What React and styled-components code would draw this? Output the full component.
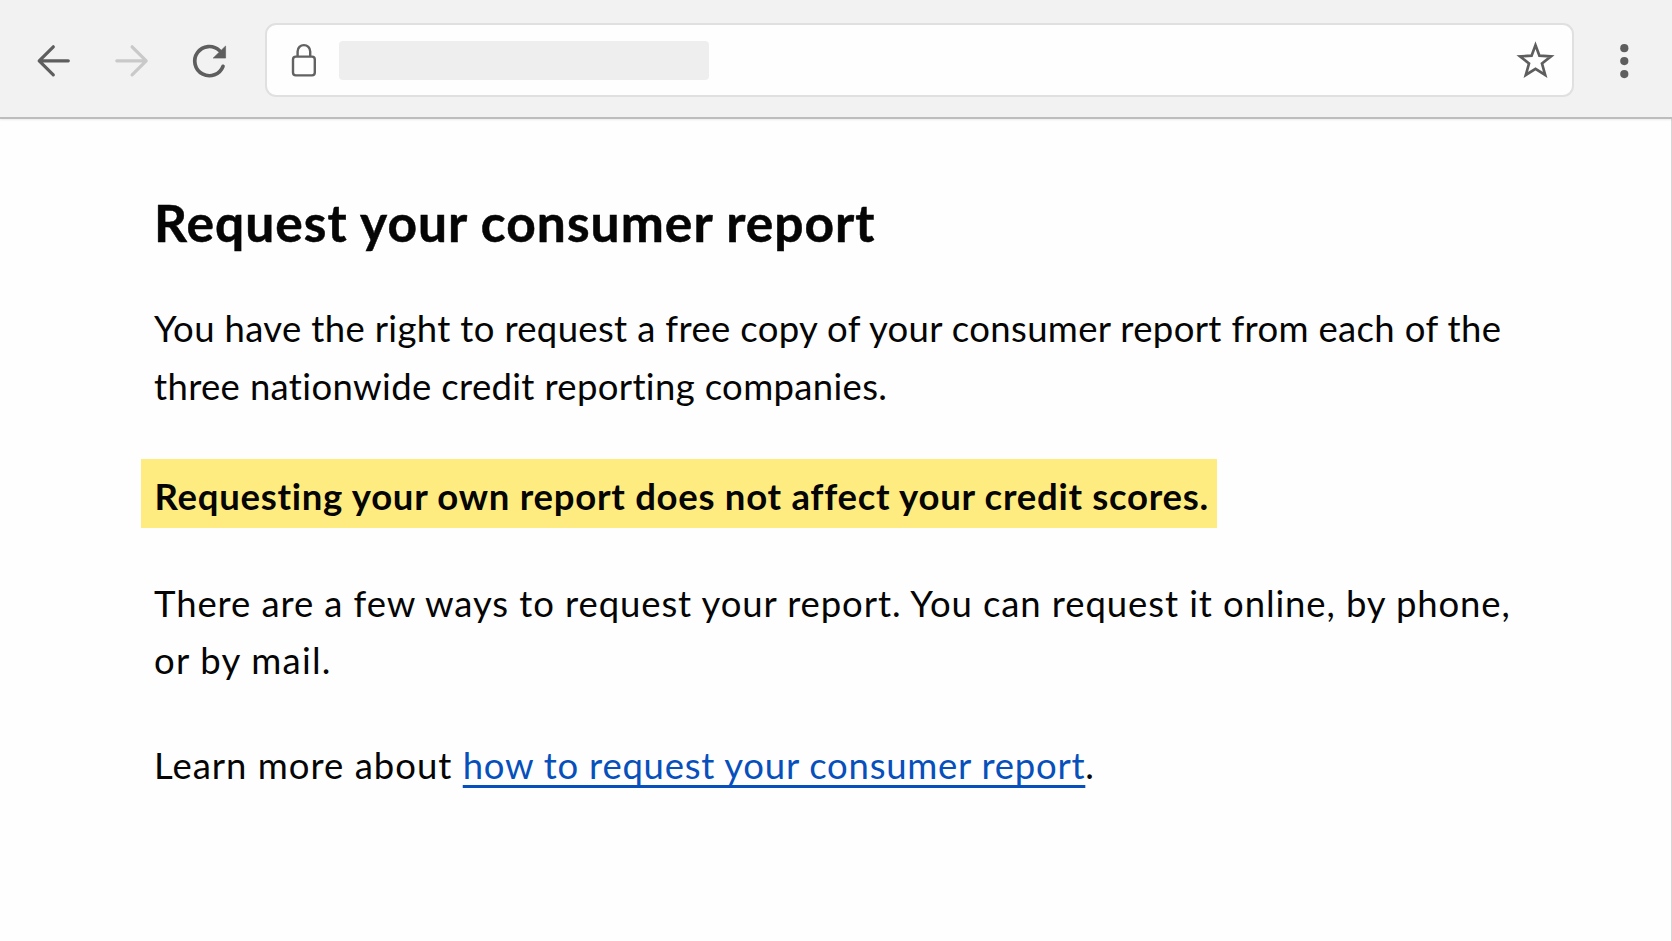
import React from "react";
import styled, { createGlobalStyle } from "styled-components";

const GlobalStyle = createGlobalStyle`
  *, *::before, *::after { box-sizing: border-box; }
  body {
    margin: 0;
    background: #fefefe;
    font-family: Lato, "Open Sans", sans-serif;
    color: #050505;
    overflow: hidden;
  }
`;

const Window = styled.div`
  display: flex;
  flex-direction: column;
  width: 100%;
  height: 941px;
`;

const Toolbar = styled.header`
  flex: none;
  display: flex;
  align-items: center;
  height: 119px;
  padding: 0 32px 0 32px;
  background: #f2f2f2;
  border-bottom: 2px solid #bdbdbd;
  box-shadow: 0 1px 2px rgba(0, 0, 0, 0.08);
  z-index: 1;
`;

const NavButtons = styled.nav`
  display: flex;
  gap: 33.5px;
  margin: 4px 34px 0 0;
`;

const IconButton = styled.button`
  flex: none;
  display: flex;
  width: 44px;
  height: 44px;
  padding: 0;
  border: 0;
  background: none;
  color: ${({ $muted }) => ($muted ? "#c9c9c9" : "#5e5e5e")};

  svg { display: block; width: 44px; height: 44px; overflow: visible; }
`;

const AddressBar = styled.div`
  flex: 1;
  display: flex;
  align-items: center;
  height: 74px;
  margin-top: 2px;
  padding: 0 15px 0 14px;
  border: 2px solid #e0e0e0;
  border-radius: 11px;
  background: #fefefe;
`;

const UrlPlaceholder = styled.div`
  width: 370px;
  height: 39px;
  margin: 1px auto 0 13.5px;
  border-radius: 4px;
  background: #eeeeee;
`;

const MenuSlot = styled.div`
  margin: 4px -6px 0 28px;
`;

const Content = styled.main`
  flex: 1;
  padding: 73px 140px 0 154px;
  border-right: 1px solid #d6d6d6;
`;

const Heading = styled.h1`
  margin: 0 0 47px;
  font-size: 51.5px;
  line-height: 60px;
  font-weight: 700;
  letter-spacing: 1.04px;
  -webkit-text-stroke: 0.5px currentColor;
`;

const Paragraph = styled.p`
  margin: 0 0 ${({ $after }) => $after || 0}px;
  font-size: 36.5px;
  line-height: ${({ $leading }) => $leading || 58}px;
  white-space: nowrap;
`;

const Line = styled.span`
  display: block;
  letter-spacing: ${({ $tracking }) => $tracking}px;
`;

const Highlight = styled.strong`
  display: block;
  width: 1076px;
  height: 69px;
  margin: 0 0 47px -13px;
  padding: 8px 0 3px 13.5px;
  background: #ffec80;
  font-size: 36.5px;
  line-height: 58px;
  font-weight: 700;
  letter-spacing: 0.73px;
  white-space: nowrap;
`;

const Link = styled.a`
  color: #0750bc;
  letter-spacing: 0.75px;
  text-decoration: underline;
  text-decoration-thickness: 2.6px;
  text-underline-offset: 6px;
  text-decoration-skip-ink: none;
`;

const ArrowIcon = ({ forward }) => (
  <svg viewBox="0 0 44 44" fill="none" stroke="currentColor" strokeWidth="3.2" strokeLinecap="round" strokeLinejoin="round">
    {forward ? (
      <path d="M6.8 21.8H36M22.1 7.8L36.2 21.8L22.1 35.8" />
    ) : (
      <path d="M36.3 21.8H7.3M21.3 7.8L7.2 21.8L21.3 35.8" />
    )}
  </svg>
);

const ReloadIcon = () => (
  <svg viewBox="0 0 44 44">
    <path d="M36 27.3A14.6 14.6 0 1 1 32.4 11.5" fill="none" stroke="currentColor" strokeWidth="3.7" strokeLinecap="round" />
    <path d="M38.6 7V19.1H26.2Z" fill="currentColor" stroke="currentColor" strokeWidth="0.6" strokeLinejoin="round" />
  </svg>
);

const LockIcon = styled.svg`
  flex: none;
  width: 46px;
  height: 44px;
  margin: 0 -2px 0 0;
  color: #626262;
`;

export default function App() {
  return (
    <Window>
      <GlobalStyle />
      <Toolbar>
        <NavButtons>
          <IconButton aria-label="Back"><ArrowIcon /></IconButton>
          <IconButton aria-label="Forward" $muted><ArrowIcon forward /></IconButton>
          <IconButton aria-label="Reload"><ReloadIcon /></IconButton>
        </NavButtons>
        <AddressBar>
          <LockIcon viewBox="0 0 46 44" fill="none" stroke="currentColor" strokeWidth="2.4">
            <rect x="12" y="18.6" width="21.8" height="18.8" rx="2.8" />
            <path d="M16.6 18.6V13.4a6.3 6.3 0 0 1 12.6 0V18.6" />
          </LockIcon>
          <UrlPlaceholder />
          <IconButton aria-label="Bookmark">
            <svg viewBox="0 0 44 44" fill="none" stroke="currentColor" strokeWidth="2.7">
              <path d="M22.5 7.1L26.4 17.6L38 18.4L29 25.5L32.2 37L22.5 30.9L12.8 37L16 25.5L7 18.4L18.6 17.6Z" />
            </svg>
          </IconButton>
        </AddressBar>
        <MenuSlot>
          <IconButton aria-label="Menu">
            <svg viewBox="0 0 44 44" fill="currentColor">
              <circle cx="22.3" cy="9.2" r="4.1" />
              <circle cx="22.3" cy="22.1" r="4.1" />
              <circle cx="22.3" cy="35.1" r="4.1" />
            </svg>
          </IconButton>
        </MenuSlot>
      </Toolbar>
      <Content>
        <Heading>Request your consumer report</Heading>
        <Paragraph $after={44}>
          <Line $tracking={0.34}>You have the right to request a free copy of your consumer report from each of the</Line>
          <Line $tracking={0.34}>three nationwide credit reporting companies.</Line>
        </Paragraph>
        <Highlight>Requesting your own report does not affect your credit scores.</Highlight>
        <Paragraph $leading={57} $after={47}>
          <Line $tracking={0.9}>There are a few ways to request your report. You can request it online, by phone,</Line>
          <Line $tracking={1.25}>or by mail.</Line>
        </Paragraph>
        <Paragraph>
          <Line $tracking={1}>
            Learn more about <Link href="#">how to request your consumer report</Link>.
          </Line>
        </Paragraph>
      </Content>
    </Window>
  );
}
